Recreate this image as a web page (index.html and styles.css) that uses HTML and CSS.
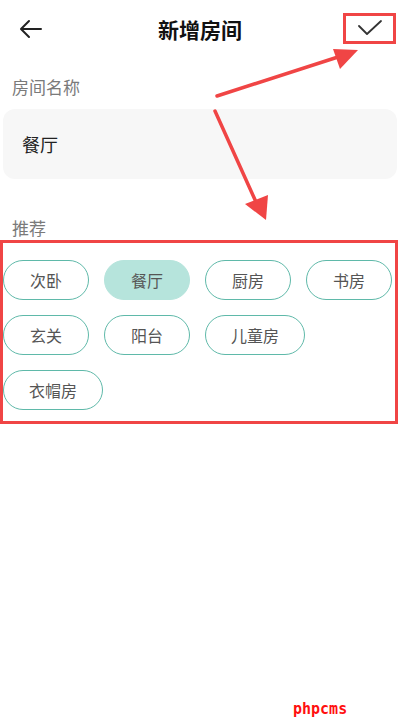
FILE: index.html
```html
<!DOCTYPE html>
<html lang="zh-CN">
<head>
  <meta charset="UTF-8" />
  <title>新增房间</title>
  <link rel="stylesheet" href="styles.css">
</head>
<body>

<div class="page">
  <header class="topbar">
    <span class="back">
      <svg width="24" height="20" viewBox="0 0 24 20"><path d="M22 10H3M10 2L2 10l8 8" fill="none" stroke="#222" stroke-width="2" stroke-linecap="round" stroke-linejoin="round"/></svg>
    </span>
    <h1>新增房间</h1>
    <span class="done">
      <svg width="26" height="16" viewBox="0 0 26 16"><path d="M2 6l8 8L24 1" fill="none" stroke="#333" stroke-width="1.8" stroke-linecap="round" stroke-linejoin="round"/></svg>
    </span>
  </header>

  <div class="label">房间名称</div>
  <div class="field">餐厅</div>

  <div class="label label-rec">推荐</div>
  <div class="mark-box">
    <div class="chips">
      <span class="chip">次卧</span>
      <span class="chip active">餐厅</span>
      <span class="chip">厨房</span>
      <span class="chip">书房</span>
      <span class="chip">玄关</span>
      <span class="chip">阳台</span>
      <span class="chip">儿童房</span>
      <span class="chip">衣帽房</span>
    </div>
  </div>

  <!-- 标注箭头 -->
  <svg class="arrows" width="400" height="240" viewBox="0 0 400 240">
    <line x1="217" y1="96" x2="338" y2="57" stroke="#f04545" stroke-width="3.5" stroke-linecap="round"/>
    <polygon points="358,50 333,49 340,69" fill="#f04545"/>
    <line x1="215" y1="111" x2="256" y2="202" stroke="#f04545" stroke-width="3.5" stroke-linecap="round"/>
    <polygon points="266,220 245,204 268,195" fill="#f04545"/>
  </svg>

  <div class="watermark">phpcms</div>
</div>

</body>
</html>
```

FILE: styles.css
```css
:root {
  --teal: #5fb9a9;
  --teal-fill: #b6e4dc;
  --mark: #f04545;
  --text: #222222;
  --muted: #7a7a7a;
}

* {
  box-sizing: border-box;
}

body {
  margin: 0;
  background: #ffffff;
  font-family: "Noto Sans CJK SC", "Noto Sans", sans-serif;
  color: var(--text);
}

.page {
  position: relative;
  width: 400px;
  height: 727px;
  overflow: hidden;
}

.topbar {
  height: 58px;
  display: grid;
  grid-template-columns: 1fr auto 1fr;
  align-items: center;
  padding: 0 4px;
}

.topbar h1 {
  margin: 0;
  font-size: 21px;
  font-weight: bold;
  color: #111;
}

.back {
  display: flex;
  margin-left: 15px;
}

.done {
  justify-self: end;
  display: flex;
  align-items: center;
  justify-content: center;
  width: 53px;
  height: 31px;
  border: 3px solid var(--mark);
  margin-top: -2px;
}

.label {
  font-size: 17px;
  color: var(--muted);
  padding-left: 12px;
  line-height: 24px;
  margin-top: 17px;
}

.field {
  margin: 10px 3px 0;
  height: 70px;
  background: #f7f7f7;
  border-radius: 12px;
  display: flex;
  align-items: center;
  padding-left: 19px;
  font-size: 18px;
  color: #222;
}

.label-rec {
  margin-top: 37px;
}

.mark-box {
  width: 398px;
  border: 3px solid var(--mark);
  padding: 17px 0 11px 0;
}

.chips {
  display: flex;
  flex-wrap: wrap;
  gap: 15px;
}

.chip {
  height: 40px;
  min-width: 86px;
  padding: 0 25px;
  border: 1.8px solid var(--teal);
  border-radius: 20px;
  display: flex;
  align-items: center;
  justify-content: center;
  font-size: 16px;
  color: #555;
}

.chip.active {
  background: var(--teal-fill);
  border-color: var(--teal-fill);
}

.arrows {
  position: absolute;
  left: 0;
  top: 0;
}

.watermark {
  position: absolute;
  left: 293px;
  top: 700px;
  font-family: "DejaVu Sans Mono", monospace;
  font-size: 15px;
  font-weight: bold;
  color: #ff1010;
  letter-spacing: 0;
}
```
